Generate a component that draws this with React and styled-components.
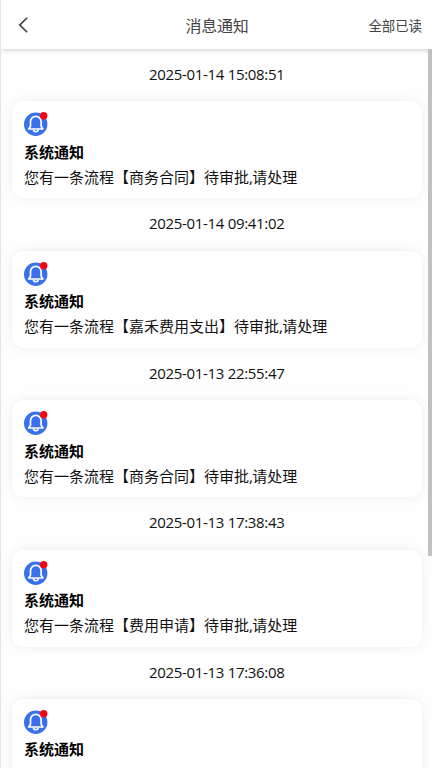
import React from 'react'
import styled, { createGlobalStyle } from 'styled-components';


const notices = [
    { id: 1, time: '2025-01-14 15:08:51', text: '您有一条流程【商务合同】待审批', end: '请处理' },
    { id: 2, time: '2025-01-14 09:41:02', text: '您有一条流程【嘉禾费用支出】待审批', end: '请处理' },
    { id: 3, time: '2025-01-13 22:55:47', text: '您有一条流程【商务合同】待审批', end: '请处理' },
    { id: 4, time: '2025-01-13 17:38:43', text: '您有一条流程【费用申请】待审批', end: '请处理' },
    { id: 5, time: '2025-01-13 17:36:08' },
];

function BellIcon() {
  return (
    <Bell viewBox="0 0 24 24">
        <circle cx="11.7" cy="12.2" r="11.7" fill="#3a70ec" />
        <path d="M6.5 14.2V9.6a5.3 5.3 0 0 1 10.6 0v4.6l1.8 2.8H4.7z" fill="none" stroke="#fff" strokeWidth="1.7" strokeLinejoin="round" />
        <path d="M9.4 17.6a2.4 2.1 0 0 0 4.8 0" fill="none" stroke="#fff" strokeWidth="1.5" />
        <circle cx="19.7" cy="3.8" r="3.7" fill="#f5060e" />
    </Bell>
  );
}

function App() {
  return (
    <Page>
        <GlobalStyle />
        <Header>
            <Back aria-label="返回">
                <svg width="12" height="18" viewBox="0 0 12 18">
                    <path d="M11.2 1.8 3.8 9l7.4 7.2" fill="none" stroke="#3c3c3c" strokeWidth="1.6" />
                </svg>
            </Back>
            <Title>消息通知</Title>
            <ReadAll>全部已读</ReadAll>
        </Header>
        <List>
            {notices.map((notice) => (
                <li key={notice.id}>
                    <Time>{notice.time}</Time>
                    <Card>
                        <BellIcon />
                        <h2>系统通知</h2>
                        {notice.text && <p>{notice.text}<Comma>,</Comma>{notice.end}</p>}
                    </Card>
                </li>
            ))}
        </List>
        <ScrollThumb />
    </Page>
  );
}

const GlobalStyle = createGlobalStyle`
 *{
    box-sizing: border-box;
 }
 body{
    margin: 0;
    overflow: hidden;
    background: #fff;
    font-family: "Noto Sans", "Noto Sans CJK SC", sans-serif;
 }
`;

const Page = styled.div`
 position: relative;
 display: flex;
 flex-direction: column;
 height: 100vh;
 overflow: hidden;
 border-left: 1px solid #e4e4e4;
 background: #fefefe;
`;

const Header = styled.header`
 position: relative;
 z-index: 1;
 display: grid;
 grid-template-columns: 1fr auto 1fr;
 align-items: center;
 flex: none;
 height: 49px;
 padding: 0 10px 0 15px;
 background: #fff;
 box-shadow: 0 1px 5px rgba(0, 0, 0, 0.2);
`;

const Back = styled.button`
 display: flex;
 width: 12px;
 padding: 0;
 border: 0;
 background: none;
`;

const Title = styled.h1`
 margin: 0;
 padding-right: 4px;
 color: #444;
 font: 400 16px/24px "Noto Sans CJK SC", sans-serif;
 letter-spacing: -0.2px;
`;

const ReadAll = styled.span`
 justify-self: end;
 color: #444;
 font: 400 13.4px/20px "Noto Sans CJK SC", sans-serif;
`;

const List = styled.ul`
 flex: 1;
 min-height: 0;
 margin: 0;
 padding: 0 10.5px 0 11px;
 overflow: hidden;
 list-style: none;
`;

const Time = styled.div`
 height: 52.4px;
 color: #111;
 font-family: "Open Sans", sans-serif;
 font-size: 15px;
 line-height: 51.4px;
 letter-spacing: -0.32px;
 text-align: center;
`;

const Card = styled.article`
 height: 97px;
 padding: 11px 12px;
 border-radius: 12px;
 background: #fff;
 box-shadow: 0 0 12px rgba(0, 0, 0, 0.07);

 h2{
    margin: 3.5px 0 0;
    color: #000;
    font: 700 15px/24px "Noto Sans CJK SC", sans-serif;
 }
 p{
    margin: 1px 0 0;
    color: #111;
    font-size: 15px;
    line-height: 25px;
    white-space: nowrap;
 }
`;

const Comma = styled.span`
 letter-spacing: -0.9px;
`;

const Bell = styled.svg`
 display: block;
 width: 24px;
 height: 24px;
`;

/* sits over the right edge of the list */
const ScrollThumb = styled.div`
 position: absolute;
 z-index: 2;
 top: 49px;
 right: 0;
 width: 4px;
 height: 507px;
 background: #c1c1c1;
`;

export default App;
